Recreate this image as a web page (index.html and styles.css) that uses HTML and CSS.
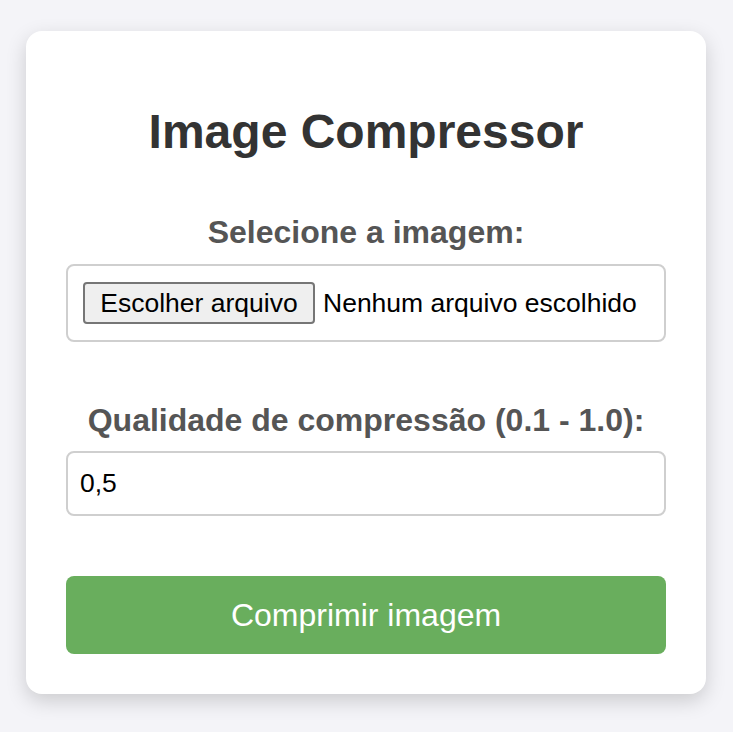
FILE: index.html
```html
<!DOCTYPE html>
<html lang="pt">
<head>
<meta charset="utf-8">
<title>Image Compressor</title>
<link rel="stylesheet" href="styles.css">
</head>
<body>
<main class="page">
  <section class="card">
    <h1 class="title">Image Compressor</h1>
    <label class="label label-file">Selecione a imagem:</label>
    <div class="file-box">
      <button class="file-btn" type="button">Escolher arquivo</button>
      <span class="file-name">Nenhum arquivo escolhido</span>
    </div>
    <label class="label label-quality" for="q">Qualidade de compressão (0.1 - 1.0):</label>
    <input class="num-input" id="q" type="text" value="0,5">
    <button class="submit" type="button">Comprimir imagem</button>
  </section>
</main>
</body>
</html>
```

FILE: styles.css
```css
html, body {
  margin: 0;
  padding: 0;
}
body {
  background: #f4f4f8;
  font-family: "Liberation Sans", Arial, Helvetica, sans-serif;
  min-height: 732px;
}
.page {
  padding: 31px 0 38px 26px;
}
.card {
  width: 680px;
  box-sizing: border-box;
  padding: 40px;
  background: #ffffff;
  border-radius: 16px;
  box-shadow: 0 7px 20px rgba(0, 0, 0, 0.17);
}
.title {
  margin: 33px 0 0;
  font-size: 48px;
  line-height: 55px;
  font-weight: 700;
  color: #333333;
  text-align: center;
}
.label {
  display: block;
  font-size: 32px;
  line-height: 37px;
  font-weight: 700;
  color: #555555;
  text-align: center;
}
.label-file {
  margin-top: 55px;
}
.label-quality {
  margin-top: 60px;
}
.file-box {
  margin-top: 13px;
  box-sizing: border-box;
  height: 78px;
  border: 2px solid #cfcfcf;
  border-radius: 8px;
  padding: 0 15px;
  display: flex;
  align-items: center;
  gap: 8px;
}
.file-btn {
  width: 232px;
  height: 42px;
  padding: 0;
  border: 2px solid #767676;
  border-radius: 4px;
  background: #efefef;
  color: #000000;
  font-family: "Liberation Sans", Arial, sans-serif;
  font-size: 26.5px;
  margin: 0;
  flex: none;
}
.file-name {
  font-size: 26.5px;
  color: #000000;
}
.num-input {
  display: block;
  margin-top: 12px;
  width: 100%;
  height: 65px;
  box-sizing: border-box;
  border: 2px solid #cfcfcf;
  border-radius: 8px;
  padding: 0 12px;
  font-family: "Liberation Sans", Arial, sans-serif;
  font-size: 26.5px;
  color: #000000;
  background: #ffffff;
  outline: none;
}
.submit {
  display: block;
  margin-top: 60px;
  width: 100%;
  height: 78px;
  border: none;
  border-radius: 8px;
  background: #69ae5d;
  color: #ffffff;
  font-family: "Liberation Sans", Arial, sans-serif;
  font-size: 32px;
  cursor: pointer;
}
```
